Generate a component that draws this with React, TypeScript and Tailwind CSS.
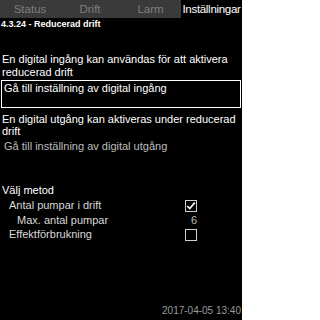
export default function App() {
  return (
    <div
      className="w-[242px] h-[320px] bg-black text-white overflow-hidden flex flex-col"
      style={{ fontFamily: '"Liberation Sans", Arial, sans-serif' }}
    >
      <div className="grid grid-cols-[60px_60px_61px_61px] h-[18px] text-[11.5px] leading-[18px]">
        <div className="bg-[#3a3a3a] text-[#7d7d7d] text-center">Status</div>
        <div className="bg-[#3a3a3a] text-[#7d7d7d] text-center">Drift</div>
        <div className="bg-[#3a3a3a] text-[#7d7d7d] text-center">Larm</div>
        <div className="bg-black text-white text-center tracking-[-0.3px] whitespace-nowrap">Inställningar</div>
      </div>
      <div className="px-[1px] pt-[1px] text-[9px] leading-[11px] font-bold">4.3.24 - Reducerad drift</div>

      <div className="mt-[23px] px-[2px] text-[11px] leading-[13px]">
        En digital ingång kan användas för att aktivera reducerad drift
      </div>
      <div className="mt-[1px] mx-[1px] h-[28px] border border-white px-[2px] pt-[1px] text-[11px] leading-[13px]">
        Gå till inställning av digital ingång
      </div>
      <div className="mt-[5px] px-[2px] text-[11px] leading-[12px]">
        En digital utgång kan aktiveras under reducerad drift
      </div>
      <div className="mt-[3px] px-[4px] text-[11px] leading-[13px] text-[#bdbdbd]">
        Gå till inställning av digital utgång
      </div>

      <div className="mt-[31px] px-[2px] text-[11px] leading-[13px]">Välj metod</div>
      <div className="mt-[1px] text-[11px] text-[#d8d8d8] flex flex-col">
        <div className="flex items-center h-[15px] pl-[9px] pr-[45px]">
          <span className="flex-1">Antal pumpar i drift</span>
          <span className="w-[12px] h-[12px] border border-[#cfcfcf] flex items-center justify-center">
            <svg viewBox="0 0 12 12" className="w-[10px] h-[10px]">
              <path d="M1.5 6 L4.5 9 L10.5 2" fill="none" stroke="white" strokeWidth="2" />
            </svg>
          </span>
        </div>
        <div className="flex items-center h-[14px] pl-[17px] pr-[45px]">
          <span className="flex-1">Max. antal pumpar</span>
          <span className="text-[#bdbdbd]">6</span>
        </div>
        <div className="flex items-center h-[15px] pl-[9px] pr-[45px]">
          <span className="flex-1">Effektförbrukning</span>
          <span className="w-[12px] h-[12px] border border-[#cfcfcf]" />
        </div>
      </div>

      <div className="mt-auto pb-[3px] pr-[1px] text-right text-[10px] leading-[12px] text-[#9a9a9a]">
        2017-04-05 13:40
      </div>
    </div>
  );
}
